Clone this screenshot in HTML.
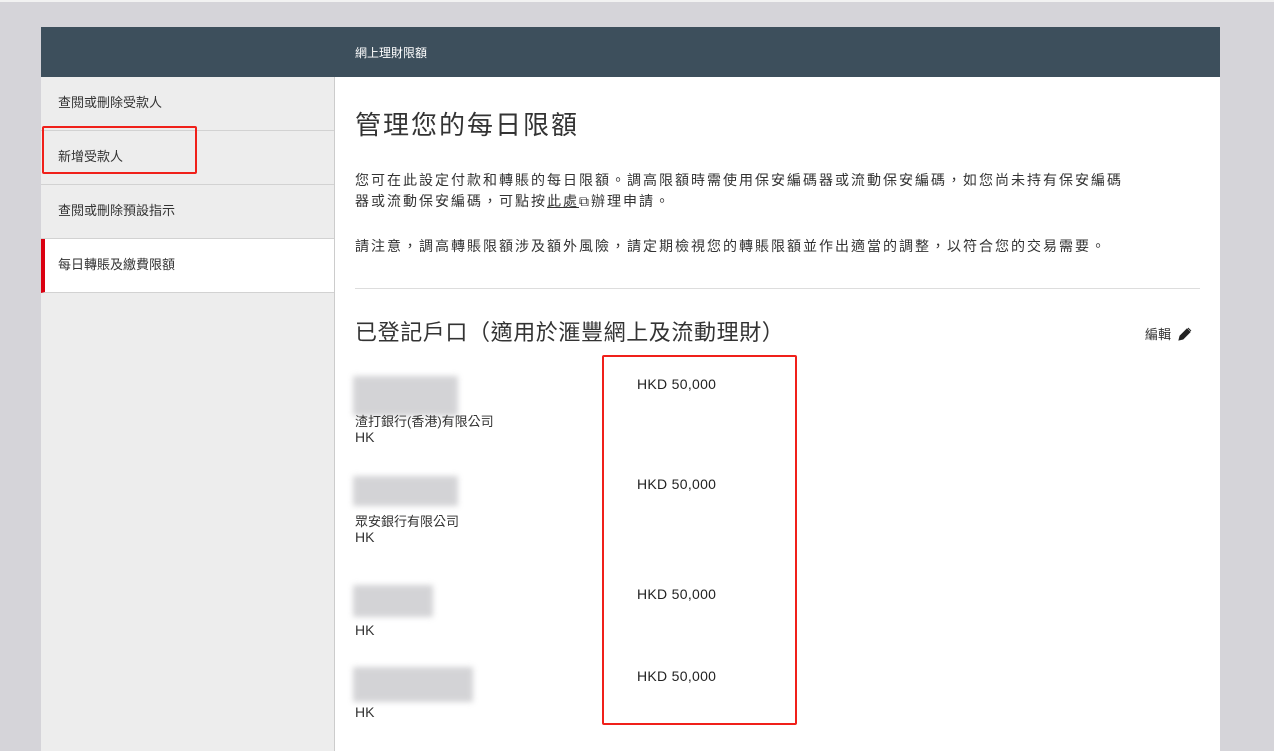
<!DOCTYPE html>
<html><head><meta charset="utf-8"><style>
*{margin:0;padding:0;box-sizing:border-box}
body{width:1274px;height:751px;background:#d5d4d9;font-family:"Liberation Sans","Noto Sans CJK TC",sans-serif;color:#333;position:relative;overflow:hidden}
.top{position:absolute;left:0;top:0;width:1274px;height:2px;background:#f2f2f2}
.hdr{position:absolute;left:41px;top:27px;width:1179px;height:50px;background:#3d4f5c;color:#fff;font-size:12px}
.hdr span{position:absolute;left:314px;top:17px}
.side{position:absolute;left:41px;top:77px;width:294px;height:674px;background:#ededed;border-right:1px solid #ccc}
.item{height:54px;border-bottom:1px solid #d2d2d2;font-size:13px;padding:15px 0 0 17px;color:#333}
.item.act{background:#fff;border-left:4px solid #db0011;padding-left:13px}
.main{position:absolute;left:335px;top:77px;width:885px;height:674px;background:#fff}
.abs{position:absolute}
h1{position:absolute;left:20px;top:28px;font-size:26px;letter-spacing:2px;font-weight:normal;color:#333}
.p{position:absolute;left:20px;font-size:14px;letter-spacing:2px;line-height:21px;color:#333;width:860px}
.hr{position:absolute;left:20px;top:211px;width:845px;height:1px;background:#ddd}
h2{position:absolute;left:20px;top:238px;font-size:22px;letter-spacing:0.6px;font-weight:normal;color:#333}
.blur{position:absolute;background:#c9c9cc;filter:blur(3px);opacity:.8}
.t{position:absolute;left:20px;font-size:13px;color:#333}
.amt{position:absolute;left:302px;font-size:14px;letter-spacing:0.3px;color:#222}
.red{position:absolute;border:2px solid #f0201a;border-radius:2px}
</style></head><body>
<div class="top"></div>
<div class="hdr"><span>網上理財限額</span></div>
<div class="side">
<div class="item">查閱或刪除受款人</div>
<div class="item">新增受款人</div>
<div class="item">查閱或刪除預設指示</div>
<div class="item act">每日轉賬及繳費限額</div>
</div>
<div class="main">
<h1>管理您的每日限額</h1>
<div class="p" style="top:93px">您可在此設定付款和轉賬的每日限額。調高限額時需使用保安編碼器或流動保安編碼，如您尚未持有保安編碼<br>器或流動保安編碼，可點按<u>此處</u>⧉辦理申請。</div>
<div class="p" style="top:159px">請注意，調高轉賬限額涉及額外風險，請定期檢視您的轉賬限額並作出適當的調整，以符合您的交易需要。</div>
<div class="hr"></div>
<h2>已登記戶口（適用於滙豐網上及流動理財）</h2>
<div class="abs" style="left:810px;top:247px;font-size:13px">編輯 <svg width="14" height="14" viewBox="0 0 14 14" style="vertical-align:-2px;margin-left:3px"><path d="M1 13l1-4 7-7 3 3-7 7z M10 1l3 3" fill="#222" stroke="#222" stroke-width="1"/></svg></div>

<div class="blur" style="left:18px;top:299px;width:105px;height:40px"></div>
<div class="t" style="top:334px">渣打銀行(香港)有限公司</div>
<div class="t" style="top:352px;font-size:14px">HK</div>
<div class="blur" style="left:18px;top:399px;width:105px;height:30px"></div>
<div class="t" style="top:434px">眾安銀行有限公司</div>
<div class="t" style="top:452px;font-size:14px">HK</div>
<div class="blur" style="left:18px;top:508px;width:80px;height:32px"></div>
<div class="t" style="top:545px;font-size:14px">HK</div>
<div class="blur" style="left:18px;top:590px;width:120px;height:35px"></div>
<div class="t" style="top:627px;font-size:14px">HK</div>

<div class="amt" style="top:299px">HKD 50,000</div>
<div class="amt" style="top:399px">HKD 50,000</div>
<div class="amt" style="top:509px">HKD 50,000</div>
<div class="amt" style="top:591px">HKD 50,000</div>
</div>
<div class="red" style="left:42px;top:126px;width:155px;height:48px"></div>
<div class="red" style="left:602px;top:355px;width:195px;height:370px"></div>
</body></html>
